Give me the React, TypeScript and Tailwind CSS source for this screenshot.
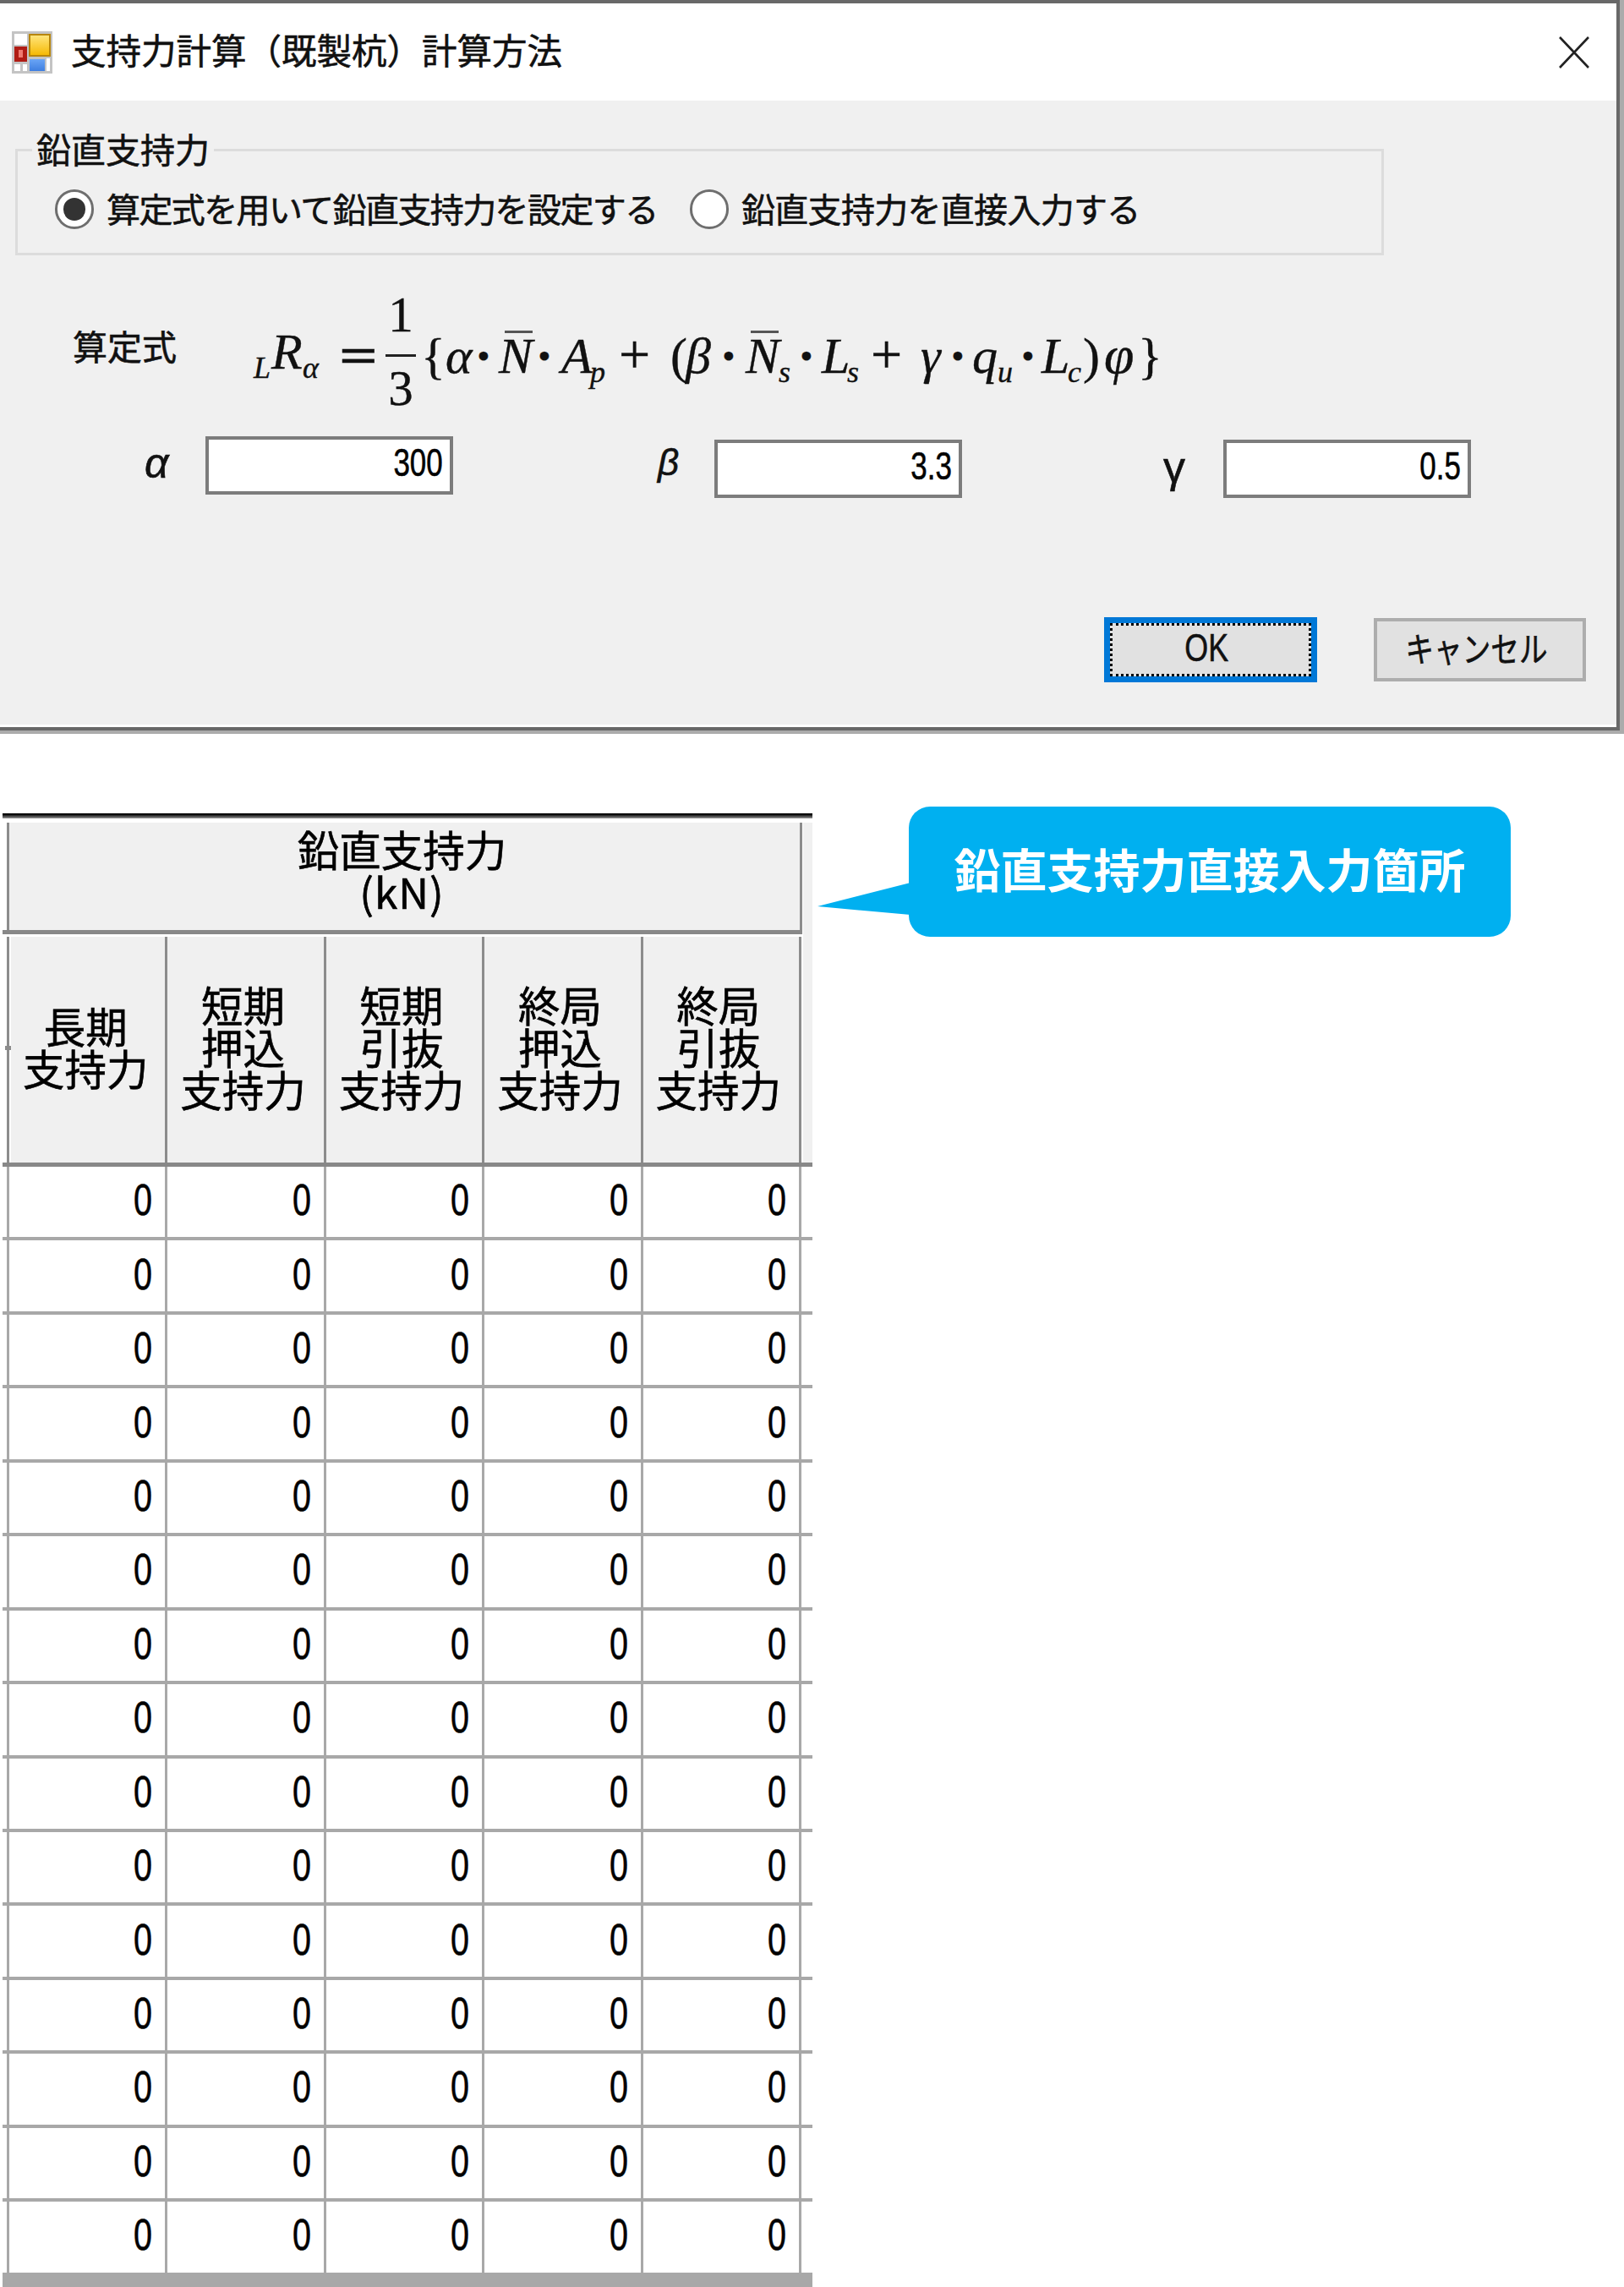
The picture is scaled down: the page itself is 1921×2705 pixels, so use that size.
import React from "react";

const cjk = "font-['Noto_Sans_CJK_JP','Liberation_Sans',sans-serif]";
// the reference text is a blown-up bitmap font, heavier than the plain face
const heavy = "[-webkit-text-stroke:0.6px_currentColor]";

function AppIcon() {
  return (
    <svg width="48" height="50" viewBox="0 0 48 50" className="shrink-0">
      <defs>
        <linearGradient id="yel" x1="0" y1="0" x2="0" y2="1">
          <stop offset="0" stopColor="#ffe680" />
          <stop offset="1" stopColor="#f5b800" />
        </linearGradient>
        <linearGradient id="blu" x1="0" y1="0" x2="0" y2="1">
          <stop offset="0" stopColor="#6aa5f5" />
          <stop offset="1" stopColor="#3f7fe0" />
        </linearGradient>
      </defs>
      <rect x="0" y="0" width="48" height="50" fill="#c4c4c4" />
      <rect x="3" y="3" width="15" height="13" fill="#fff" />
      <rect x="21" y="4" width="24" height="25" fill="url(#yel)" stroke="#b8860b" strokeWidth="2" />
      <rect x="3" y="18" width="15" height="18" fill="#b01c14" />
      <rect x="8" y="22" width="5" height="9" fill="#ef7a70" />
      <rect x="21" y="33" width="18" height="14" fill="url(#blu)" />
      <rect x="3" y="39" width="7" height="8" fill="#fff" />
      <rect x="13" y="39" width="5" height="8" fill="#fff" />
      <rect x="41" y="32" width="4" height="15" fill="#fff" />
    </svg>
  );
}

function Radio({ checked }: { checked?: boolean }) {
  return (
    <span className="flex h-[47px] w-[46px] shrink-0 items-center justify-center rounded-full border-[3px] border-[#6e6e6e] bg-white">
      {checked && <span className="h-[27px] w-[26px] rounded-full bg-[#333333]" />}
    </span>
  );
}

// narrow bitmap-looking digits, squeezed towards the right edge
function Num({ value, className }: { value: string; className: string }) {
  return (
    <span className={`inline-block origin-right scale-x-[0.76] font-['Liberation_Sans',sans-serif] leading-none text-black ${className}`}>
      {value}
    </span>
  );
}

function ValueBox({ value }: { value: string }) {
  return (
    <div className="flex h-[69px] w-[293px] shrink-0 items-center justify-end border-4 border-[#7c7c7c] bg-white pb-2 pr-[8px]">
      <Num value={value} className="text-[46px]" />
    </div>
  );
}

function Dot({ className = "" }: { className?: string }) {
  return (
    <span className={`w-[18px] shrink-0 -translate-y-[7px] text-center text-[38px] font-bold not-italic ${className}`}>•</span>
  );
}

function Formula() {
  const sub = "shrink-0 translate-y-[11px] text-[36px]";
  return (
    <div className="flex items-start font-['Liberation_Serif',serif] italic leading-none text-[#111111] [-webkit-text-stroke:0.4px_currentColor]">
      <div className="mt-[34px] flex items-baseline text-[60px]">
        <span className={`w-[21px] ${sub}`}>L</span>
        <span className="w-[37px] shrink-0">R</span>
        <span className={`w-[43px] ${sub}`}>α</span>
        <span className="inline-block w-[55px] shrink-0 origin-left translate-y-[4px] scale-x-[1.35] font-bold not-italic">=</span>
      </div>
      <div className="-mt-[9px] flex w-[36px] flex-col items-center text-[59px] not-italic">
        <span>1</span>
        <span className="mt-[17px] h-[3px] w-full bg-[#222222]" />
        <span className="mt-[8px]">3</span>
      </div>
      <div className="ml-[6px] mt-[34px] flex items-baseline text-[60px]">
        <span className="w-[29px] shrink-0 not-italic">{"{"}</span>
        <span className="w-[36px] shrink-0">α</span>
        <Dot />
        <span className="relative ml-[9px] w-[45px] shrink-0">
          N<span className="absolute left-[7px] top-[0px] h-[3px] w-[33px] bg-[#555555]" />
        </span>
        <Dot />
        <span className="ml-[11px] w-[34px] shrink-0">A</span>
        <span className={`w-[34px] ${sub}`}>p</span>
        <span className="w-[61px] shrink-0 text-[66px] not-italic">+</span>
        <span className="w-[18px] shrink-0 not-italic">(</span>
        <span className="w-[37px] shrink-0">β</span>
        <Dot className="ml-[5px]" />
        <span className="relative ml-[11px] w-[39px] shrink-0">
          N<span className="absolute left-[6px] top-[0px] h-[3px] w-[33px] bg-[#555555]" />
        </span>
        <span className={`w-[24px] ${sub}`}>s</span>
        <Dot />
        <span className="ml-[9px] w-[30px] shrink-0">L</span>
        <span className={`w-[28px] ${sub}`}>s</span>
        <span className="w-[59px] shrink-0 text-[66px] not-italic">+</span>
        <span className="w-[35px] shrink-0">γ</span>
        <Dot />
        <span className="ml-[8px] w-[30px] shrink-0">q</span>
        <span className={`w-[27px] ${sub}`}>u</span>
        <Dot />
        <span className="ml-[7px] w-[31px] shrink-0">L</span>
        <span className={`w-[18px] ${sub}`}>c</span>
        <span className="w-[25px] shrink-0 not-italic">)</span>
        <span className="w-[40px] shrink-0 text-[64px]">φ</span>
        <span className="w-[21px] shrink-0 not-italic">{"}"}</span>
      </div>
    </div>
  );
}

function Dialog() {
  return (
    <div className={`h-[868px] border-b-4 border-r-[5px] border-[#ababab] ${cjk} ${heavy}`}>
      <div className="flex h-full flex-col border-y-4 border-r-4 border-[#686868]">
        <div className="flex h-[115px] shrink-0 items-center bg-white pl-[14px] pr-[32px]">
          <AppIcon />
          <span className="ml-[22px] pb-[6px] text-[41.5px] leading-none text-[#111111]">支持力計算（既製杭）計算方法</span>
          <svg width="36" height="38" viewBox="0 0 36 38" className="ml-auto">
            <path d="M1 1 L35 37 M35 1 L1 37" stroke="#222222" strokeWidth="2.6" fill="none" />
          </svg>
        </div>

        <div className="flex-1 border-b-[3px] border-white bg-[#f0f0f0] text-[#111111]">
          <fieldset className="ml-[18px] mt-[38px] w-[1619px] border-[3px] border-[#dcdcdc] pb-[28px] pl-[44px] pt-[27px]">
            <legend className="-ml-[27px] px-[5px] pb-[3px] text-[41px] leading-[37px]">鉛直支持力</legend>
            <div className="flex items-center">
              <Radio checked />
              <span className="ml-[15px] w-[690px] pb-[3px] text-[40px] leading-none tracking-[-1.6px]">算定式を用いて鉛直支持力を設定する</span>
              <Radio />
              <span className="ml-[15px] pb-[3px] text-[40px] leading-none tracking-[-0.7px]">鉛直支持力を直接入力する</span>
            </div>
          </fieldset>

          <div className="mt-[50px] flex h-[140px] items-start pl-[86px]">
            <span className="mt-[36px] w-[214px] shrink-0 text-[41px] leading-[41px]">算定式</span>
            <Formula />
          </div>

          <div className="mt-[24px] flex items-start pl-[171px] font-['Liberation_Sans',sans-serif] leading-none">
            <span className="mt-[7px] w-[72px] shrink-0 text-[50px] italic">α</span>
            <ValueBox value="300" />
            <span className="ml-[242px] mt-[9px] w-[67px] shrink-0 text-[44px] italic">β</span>
            <div className="mt-[4px]">
              <ValueBox value="3.3" />
            </div>
            <span className="ml-[238px] mt-[10px] w-[71px] shrink-0 text-[52px]">γ</span>
            <div className="mt-[4px]">
              <ValueBox value="0.5" />
            </div>
          </div>

          <div className="mt-[141px] flex items-start justify-end gap-[67px] pr-[36px]">
            <div className="h-[77px] w-[252px] border-[7px] border-[#0078d7] bg-[#e1e1e1]">
              <div className="flex h-full items-center justify-center border-[3px] border-dotted border-black pb-[6px] pr-[10px]">
                <span className="inline-block scale-x-[0.78] font-['Liberation_Sans',sans-serif] text-[46px] leading-none">OK</span>
              </div>
            </div>
            <div className="mt-px flex h-[75px] w-[251px] items-center justify-center border-4 border-[#adadad] bg-[#e1e1e1] pb-[6px] pr-[8px]">
              <span className="inline-block scale-x-[0.82] text-[41px] leading-none">キャンセル</span>
            </div>
          </div>
        </div>
      </div>
    </div>
  );
}

const columnHeads = [
  ["長期", "支持力"],
  ["短期", "押込", "支持力"],
  ["短期", "引抜", "支持力"],
  ["終局", "押込", "支持力"],
  ["終局", "引抜", "支持力"],
];

const rows = Array.from({ length: 15 }, (_, i) => i);

function BearingTable() {
  return (
    <div className={`mt-[8px] w-[958px] shrink-0 ${cjk} ${heavy}`}>
      <div className="h-[6px] bg-linear-to-b from-black to-[#9a9a9a]" />

      <div className="mt-[5px] flex border-b-[5px] border-[#888888]">
        <div className="w-[947px] shrink-0">
          <div className="w-[946px] border-b-[5px] border-[#888888] pl-[5px]">
            <div className="flex h-[127px] flex-col items-center border-x-[3px] border-[#8c8c8c] bg-[#f0f0f0] pr-[6px] pt-[6px] text-[49.5px] leading-[50px] text-black">
              <span>鉛直支持力</span>
              <span className="tracking-[1px]">(kN)</span>
            </div>
          </div>
          <div className="relative ml-[5px] mt-[3px] grid h-[267px] w-[940px] grid-cols-5 border-l-[3px] border-[#8c8c8c]">
            <span className="absolute -left-[5px] top-[129px] h-[5px] w-[7px] bg-[#8c8c8c]" />
            {columnHeads.map((lines, i) => (
              <div
                key={i}
                className={`flex flex-col items-center justify-center border-r-[3px] border-[#8c8c8c] bg-[#f0f0f0] pb-[8px] pr-[6px] text-[49.5px] leading-[50px] text-black ${i === 0 ? "border-l-[2px] border-l-white" : ""}`}
              >
                {lines.map((line, j) => (
                  <span key={j}>{line}</span>
                ))}
              </div>
            ))}
          </div>
        </div>
        <div className="flex-1 bg-[#f0f0f0]" />
      </div>

      {rows.map((r) => (
        <div key={r} className="h-[87.45px] border-b-4 border-[#a8a8a8] pl-[5px]">
          <div className="grid h-full w-[940px] grid-cols-5 border-l-[3px] border-[#a8a8a8]">
            {[0, 1, 2, 3, 4].map((c) => (
              <div key={c} className="flex items-center justify-end border-r-[3px] border-[#a8a8a8] pb-[5px] pr-[15px]">
                <Num value="0" className="text-[52px]" />
              </div>
            ))}
          </div>
        </div>
      ))}
      <div className="h-[14px] bg-[#a8a8a8]" />
    </div>
  );
}

function Callout() {
  return (
    <div className="relative ml-[114px] flex h-[154px] w-[712px] shrink-0 items-center justify-center rounded-[25px] bg-[#00b0f0] pb-[10px]">
      <svg width="110" height="38" viewBox="0 0 110 38" className="absolute -left-[108px] top-[90px]">
        <polygon points="110,0 0,28 110,38" fill="#00b0f0" />
      </svg>
      <span className={`text-[55px] font-bold leading-none text-white ${cjk}`}>鉛直支持力直接入力箇所</span>
    </div>
  );
}

export default function App() {
  return (
    <div className="h-[2705px] w-[1921px] overflow-hidden bg-white">
      <Dialog />
      <div className="ml-[3px] mt-[86px] flex items-start">
        <BearingTable />
        <Callout />
      </div>
    </div>
  );
}
